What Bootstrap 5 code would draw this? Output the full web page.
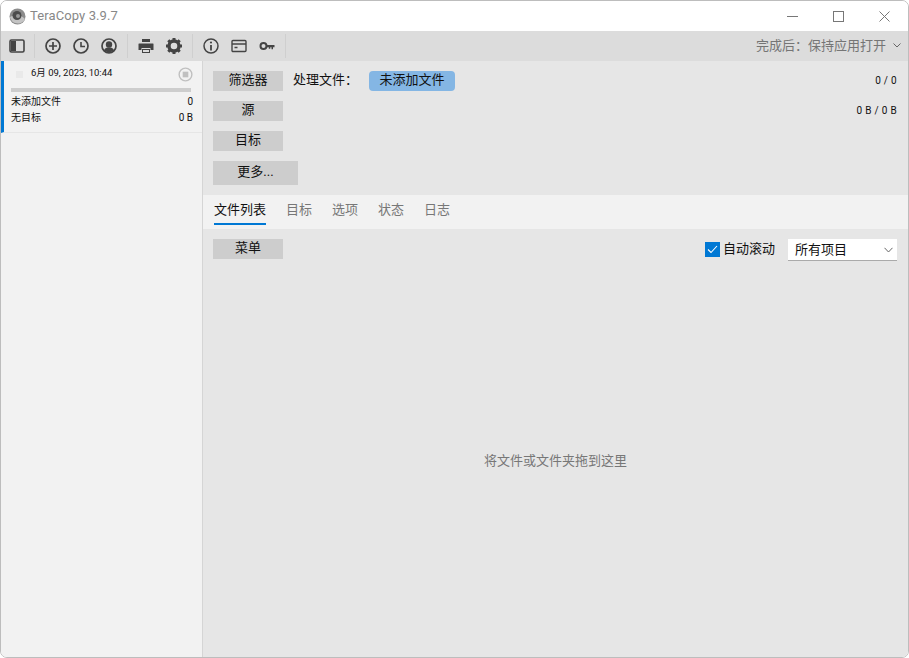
<!DOCTYPE html>
<html lang="zh-CN">
<head>
<meta charset="utf-8">
<title>TeraCopy 3.9.7</title>
<link rel="stylesheet" href="https://cdn.jsdelivr.net/npm/bootstrap@5.3.0/dist/css/bootstrap.min.css">
<style>
html,body{height:100%;margin:0;background:#fff}
body{font-family:Roboto,"Noto Sans CJK SC",sans-serif;font-size:13px;color:#111;overflow:hidden}
.appwin{width:909px;height:658px;border:1px solid #bdbdbd;border-radius:7px;overflow:hidden;background:#fff}
.titlebar{height:30px;background:#fff;color:#888;font-size:13px;padding-left:8px;letter-spacing:.1px}
.titleicon{margin-right:4px}
.winbtns{margin-right:1px}
.winbtn{width:46px;height:30px}
.toolbar{height:30px;background:#dcdcdc;padding-left:7px;padding-right:7px}
.tool{width:18px;height:18px;display:block;color:#444;flex:none}
.tgroup{display:flex;align-items:center;gap:10px;padding:0 9px;height:24px;border-right:1px solid #cfcfcf}
.tgroup:first-child{padding-left:0;padding-right:8px}
.after{color:#757575;font-size:13px;gap:7px}
.mainrow{height:597px}
.sidepane{width:202px;background:#f2f2f2;border-right:1px solid #d5d5d5;flex:none}
.jobitem{height:72px;border-left:3px solid #0078d4;border-bottom:1px solid #e6e6e6;padding:6px 9px 0 7px;font-size:10px;color:#111}
.jobdot{width:7px;height:7px;background:#e9e9e9;margin:0 0 0 5px}
.jobdate{margin-left:8px;margin-top:-3px;font-size:9.5px}
.stopic{width:15px;height:15px;margin-left:auto;display:block}
.jobbar{height:4px;background:#cdcdcd;margin:6px 0 2px 0;width:180px}
.joblines{width:182px;line-height:16px}
.content{background:#e6e6e6;min-width:0}
.panel{padding:10px 11px 10px 10px;height:134px}
.grybtn{background:#cdcdcd;border:0;border-radius:0;width:70px;height:20px;padding:0 0 2px;font-size:13px;line-height:18px;color:#111}
.grybtn.wide{width:85px;height:24px;line-height:22px}
.filelabel{margin-left:10px;width:76px;line-height:17px}
.statpill{background:#84b6e4;border-radius:4px;width:86px;height:20px;line-height:18px;text-align:center}
.nums{font-size:10px;margin-left:auto;letter-spacing:.3px;margin-top:2px}
.vstack10{display:flex;flex-direction:column;gap:10px}
.tabband{height:34px;background:#f2f2f2;padding-left:11px;gap:20px}
.tabitem{height:30px;line-height:30px;color:#777;font-size:13px}
.tabitem.on{color:#111;border-bottom:2px solid #0078d4}
.listbar{padding:10px 11px 0 10px}
.checkbox{width:15px;height:15px;background:#0078d4;display:block;flex:none;margin-bottom:2px}
.autotxt{margin:0 13px 3px 3px}
.fakesel{width:109px;height:22px;background:#fff;border-bottom:1px solid #aaa;padding:0 4px 0 7px;line-height:21px}
.dropzone{color:#777;font-size:13px;padding-top:4px}
</style>
</head>
<body>
<div class="appwin d-flex flex-column">
  <div class="titlebar d-flex align-items-center">
    <svg width="17" height="17" viewBox="0 0 17 17" class="titleicon"><circle cx="8.5" cy="8.5" r="8" fill="#8c8c8c"/><path d="M1 9a8 8 0 0 0 15 2c-3-4-10-5-15-2z" fill="#c4c4c4"/><circle cx="8" cy="7.5" r="4.5" fill="#4c4c4c"/><circle cx="9" cy="8" r="2" fill="#999"/></svg>
    <span>TeraCopy 3.9.7</span>
    <div class="ms-auto d-flex winbtns">
      <div class="winbtn d-flex align-items-center justify-content-center"><svg width="11" height="11" viewBox="0 0 11 11"><path d="M0 5.5h11" stroke="#777"/></svg></div>
      <div class="winbtn d-flex align-items-center justify-content-center"><svg width="11" height="11" viewBox="0 0 11 11"><rect x=".5" y=".5" width="10" height="10" fill="none" stroke="#777"/></svg></div>
      <div class="winbtn d-flex align-items-center justify-content-center"><svg width="11" height="11" viewBox="0 0 11 11"><path d="M.5.5l10 10M10.5.5l-10 10" stroke="#777"/></svg></div>
    </div>
  </div>
  <div class="toolbar d-flex align-items-center">
    <div class="tgroup">
      <svg class="tool" viewBox="0 0 18 18"><rect x="2" y="3" width="14" height="12" rx="1.5" fill="none" stroke="#444" stroke-width="1.6"/><rect x="3" y="4" width="5" height="10" fill="#444"/></svg>
    </div>
    <div class="tgroup">
      <svg class="tool" viewBox="0 0 18 18"><circle cx="9" cy="9" r="7" fill="none" stroke="#444" stroke-width="1.7"/><path d="M9 5v8M5 9h8" stroke="#444" stroke-width="1.7"/></svg>
      <svg class="tool" viewBox="0 0 18 18"><circle cx="9" cy="9" r="7" fill="none" stroke="#444" stroke-width="1.7"/><path d="M9 5v4.5h4" fill="none" stroke="#444" stroke-width="1.6"/></svg>
      <svg class="tool" viewBox="0 0 18 18"><circle cx="9" cy="9" r="7" fill="none" stroke="#444" stroke-width="1.7"/><circle cx="9" cy="7.5" r="3.2" fill="#444"/><path d="M3.8 13.5c1-2.5 3-3 5.2-3s4.2.5 5.2 3L9 16z" fill="#444"/></svg>
    </div>
    <div class="tgroup">
      <svg class="tool" viewBox="0 0 18 18"><path d="M5 2h8v3H5z" fill="#444"/><path d="M2 6.5h14a.5.5 0 0 1 .5.5v6H13.500v-2h-9v2H1.500V7a.5.5 0 0 1 .5-.5z" fill="#444"/><path d="M5 12h8v4H5z" fill="#444"/><path d="M6 13h6v2H6z" fill="#dcdcdc"/></svg>
      <svg class="tool" viewBox="0 0 18 18"><circle cx="9" cy="9" r="5" fill="none" stroke="#444" stroke-width="3.400"/><path d="M9 1v3M9 14v3M1 9h3M14 9h3M3.300 3.300l2.100 2.100M12.600 12.600l2.100 2.100M14.700 3.300l-2.100 2.100M5.400 12.600l-2.100 2.100" stroke="#444" stroke-width="3"/></svg>
    </div>
    <div class="tgroup">
      <svg class="tool" viewBox="0 0 18 18"><circle cx="9" cy="9" r="7" fill="none" stroke="#444" stroke-width="1.5"/><path d="M9 8v5.500" stroke="#444" stroke-width="1.800"/><circle cx="9" cy="5.500" r="1.100" fill="#444"/></svg>
      <svg class="tool" viewBox="0 0 18 18"><rect x="2" y="3.500" width="14" height="11" rx="1" fill="none" stroke="#444" stroke-width="1.400"/><path d="M2 7h14" stroke="#444" stroke-width="1.400"/><path d="M4.500 10.500h3" stroke="#444" stroke-width="1.500"/></svg>
      <svg class="tool" viewBox="0 0 18 18"><circle cx="5.500" cy="9" r="3" fill="none" stroke="#444" stroke-width="2"/><path d="M8.500 8h8v2.200h-1.500v2h-1.500v-2h-1.200v1.500h-1.500v-1.500h-2.300z" fill="#444"/></svg>
    </div>
    <div class="ms-auto d-flex align-items-center after">
      <span>完成后：保持应用打开</span>
      <svg width="8" height="5" viewBox="0 0 8 5"><path d="M.5.5L4 4 7.500.5" fill="none" stroke="#666"/></svg>
    </div>
  </div>
  <div class="mainrow d-flex">
    <div class="sidepane">
      <div class="jobitem">
        <div class="d-flex align-items-center">
          <span class="jobdot"></span>
          <span class="jobdate">6月 09, 2023, 10:44</span>
          <svg class="stopic" viewBox="0 0 16 16"><circle cx="8" cy="8" r="6.800" fill="none" stroke="#c0c0c0" stroke-width="1.500"/><rect x="5" y="5" width="6" height="6" fill="#c0c0c0"/></svg>
        </div>
        <div class="jobbar"></div>
        <div class="joblines">
          <div class="d-flex justify-content-between"><span>未添加文件</span><span>0</span></div>
          <div class="d-flex justify-content-between"><span>无目标</span><span>0 B</span></div>
        </div>
      </div>
    </div>
    <div class="content flex-grow-1 d-flex flex-column">
      <div class="panel vstack10">
        <div class="d-flex">
          <button type="button" class="btn grybtn">筛选器</button>
          <span class="filelabel">处理文件：</span>
          <span class="statpill">未添加文件</span>
          <span class="nums">0 / 0</span>
        </div>
        <div class="d-flex">
          <button type="button" class="btn grybtn">源</button>
          <span class="nums">0 B / 0 B</span>
        </div>
        <div class="d-flex"><button type="button" class="btn grybtn">目标</button></div>
        <div class="d-flex"><button type="button" class="btn grybtn wide">更多...</button></div>
      </div>
      <div class="tabband d-flex">
        <div class="tabitem on">文件列表</div>
        <div class="tabitem">目标</div>
        <div class="tabitem">选项</div>
        <div class="tabitem">状态</div>
        <div class="tabitem">日志</div>
      </div>
      <div class="listbar d-flex align-items-start">
        <button type="button" class="btn grybtn">菜单</button>
        <div class="ms-auto d-flex align-items-center">
          <svg class="checkbox" viewBox="0 0 15 15"><path d="M3 7.500l3 3 6-6.500" fill="none" stroke="#fff" stroke-width="1.100"/></svg>
          <span class="autotxt">自动滚动</span>
          <div class="fakesel d-flex justify-content-between align-items-center">
            <span>所有项目</span>
            <svg width="9" height="6" viewBox="0 0 9 6"><path d="M.5.8L4.500 5 8.500.8" fill="none" stroke="#666"/></svg>
          </div>
        </div>
      </div>
      <div class="dropzone flex-grow-1 d-flex align-items-center justify-content-center">将文件或文件夹拖到这里</div>
    </div>
  </div>
</div>
<script src="https://cdn.jsdelivr.net/npm/bootstrap@5.3.0/dist/js/bootstrap.bundle.min.js"></script>
</body>
</html>
